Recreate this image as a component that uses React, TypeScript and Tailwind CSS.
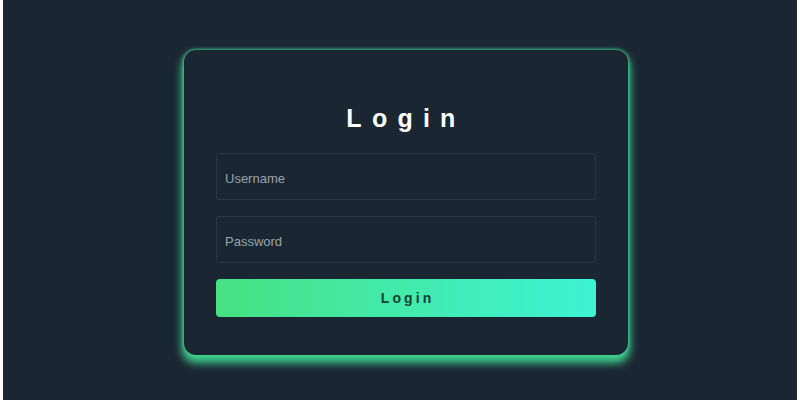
import React from "react";

export default function App() {
  return (
    <div className="w-[800px] h-[400px] bg-white px-[3px]" style={{ fontFamily: "'Liberation Sans', Arial, sans-serif" }}>
      <div className="h-full bg-[#1b2633] flex justify-start pl-[181px] pt-[50px]">
        <div className="w-[444px] h-[305px] rounded-[12px] bg-[#1b2633] shadow-[0_0_3px_1px_rgba(63,210,143,0.8),0_6px_8px_2px_#3fd28f] px-8 pt-[52px]">
          <h1 className="text-center text-white text-[25px] leading-[32px] font-bold tracking-[0.41em]">
            Login
          </h1>
          <div className="mt-[19px] flex flex-col gap-[16px]">
            <input
              className="h-[47px] w-full rounded-[3px] border border-[#2a3646] bg-[#1b2633] px-2 pt-[4px] text-[13px] text-gray-300 placeholder:text-[#9aa3ad] outline-none"
              placeholder="Username"
            />
            <input
              type="password"
              className="h-[47px] w-full rounded-[3px] border border-[#2a3646] bg-[#1b2633] px-2 pt-[3px] text-[13px] text-gray-300 placeholder:text-[#9aa3ad] outline-none"
              placeholder="Password"
            />
            <button className="h-[38px] w-full rounded-[4px] bg-gradient-to-r from-[#47e182] to-[#3ef3d4] text-[#17402f] text-[14px] font-bold tracking-[0.22em] pl-[0.22em]">
              Login
            </button>
          </div>
        </div>
      </div>
    </div>
  );
}
